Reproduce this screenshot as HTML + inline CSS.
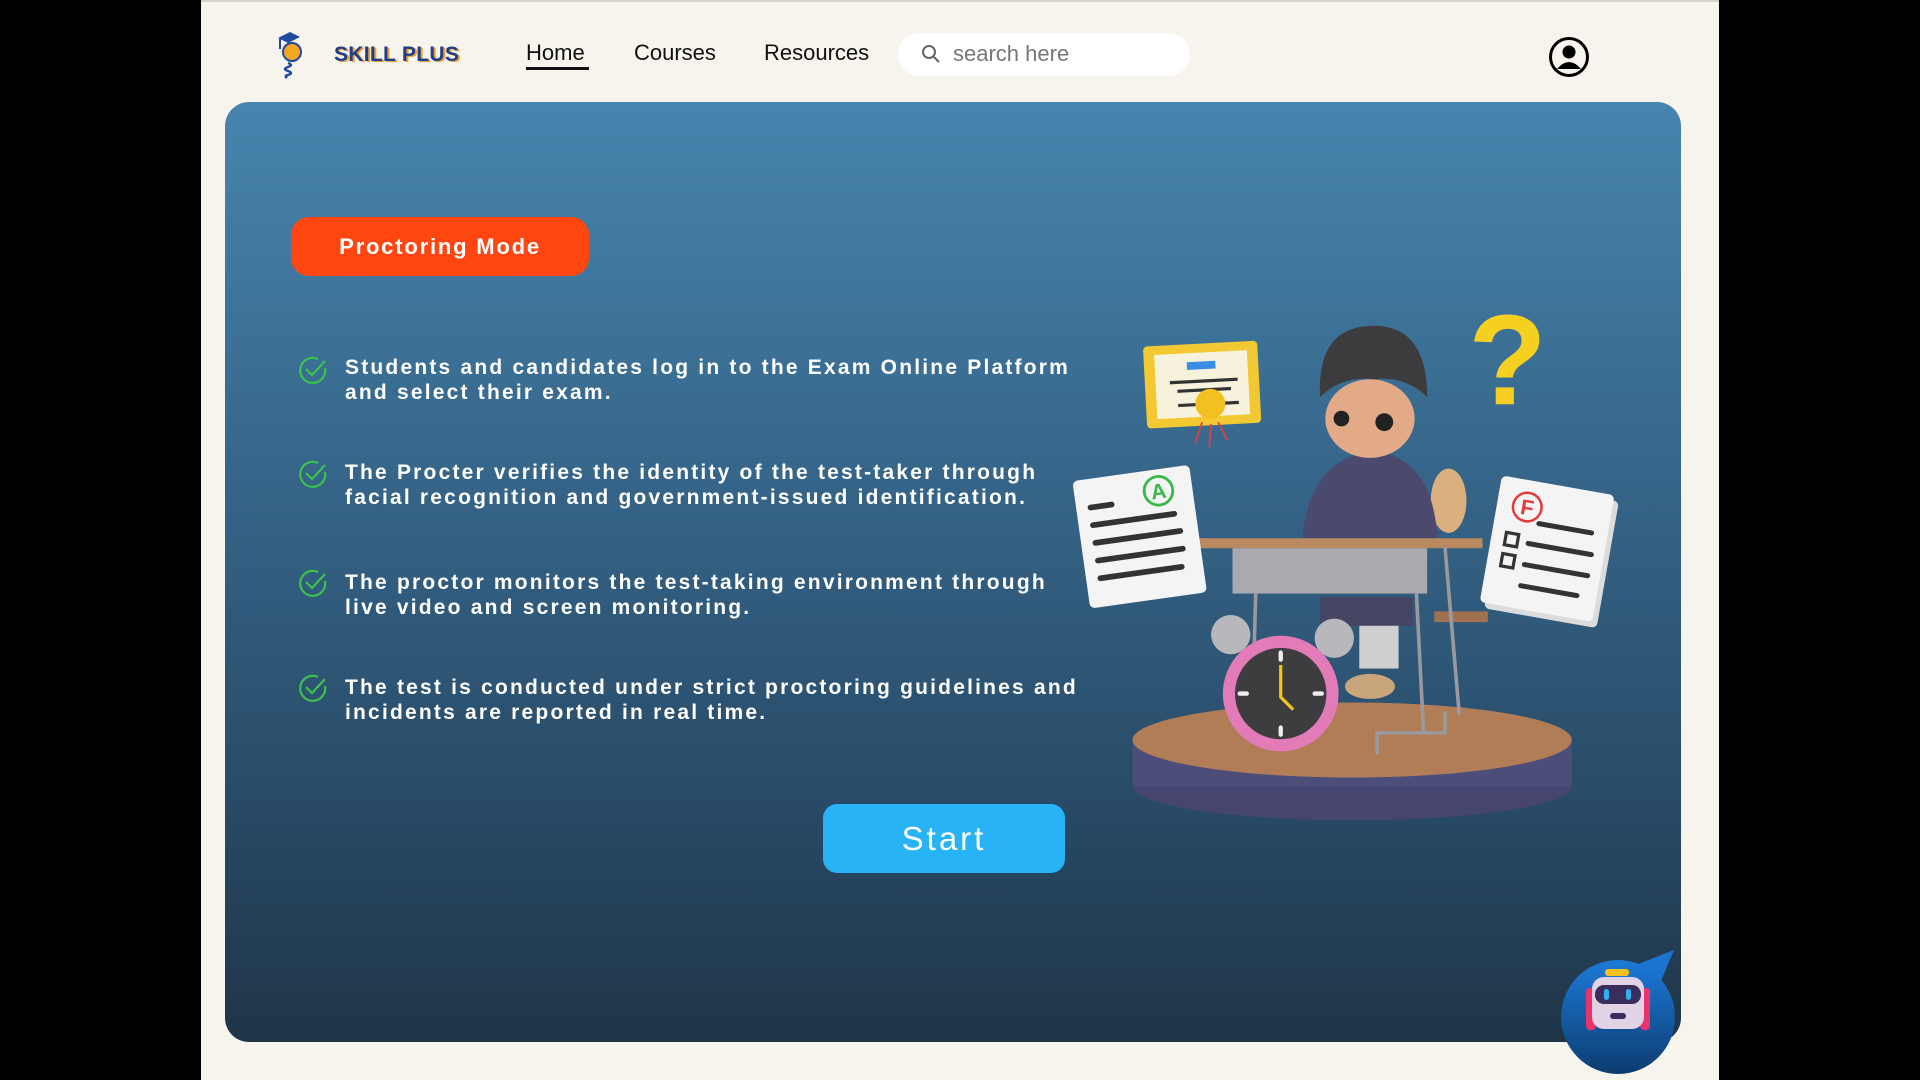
<!DOCTYPE html>
<html><head><meta charset="utf-8">
<style>
*{margin:0;padding:0;box-sizing:border-box}
body{width:1920px;height:1080px;background:#000;position:relative;overflow:hidden;font-family:"Liberation Sans",sans-serif}
#page{position:absolute;left:201px;top:0;width:1518px;height:1080px;background:#f6f4ec;border-top:2px solid #d5d3cc}
.abs{position:absolute}
.nav{position:absolute;top:40px;font-size:22px;color:#111}
#card{position:absolute;left:225px;top:102px;width:1456px;height:940px;border-radius:24px;background:linear-gradient(180deg,#4785ae 0%,#366589 40%,#284a66 75%,#1f3547 100%)}
.item{position:absolute;left:345px;color:#fff;font-weight:bold;font-size:21px;letter-spacing:2.2px;line-height:24.5px;white-space:nowrap}
.chk{position:absolute;left:298px;width:30px;height:30px}
</style></head><body>
<div id="page"></div>
<!-- logo -->
<svg class="abs" style="left:272px;top:30px" width="40" height="50" viewBox="0 0 40 50">
<polygon points="6,8 18,2 28,7 16,13" fill="#1f4aa0"/>
<rect x="7" y="9" width="2" height="10" fill="#1f4aa0"/>
<circle cx="20" cy="22" r="9" fill="#f5a623" stroke="#1f4aa0" stroke-width="2"/>
<path d="M16 33 q6 2 0 4 q-6 2 0 4 q6 2 0 4 q-4 1 -1 3" fill="none" stroke="#1f4aa0" stroke-width="2.5"/>
</svg>
<div class="abs" style="left:334px;top:43px;font-size:21px;font-weight:900;color:#1d3f8c;letter-spacing:0.3px;text-shadow:2px 1px 0 #f0a030">SKILL PLUS</div>
<div class="nav" style="left:526px">Home</div>
<div class="abs" style="left:526px;top:67px;width:63px;height:3px;background:#111"></div>
<div class="nav" style="left:634px">Courses</div>
<div class="nav" style="left:764px">Resources</div>
<div class="abs" style="left:898px;top:33px;width:292px;height:43px;border-radius:22px;background:#fff"></div>
<svg class="abs" style="left:920px;top:43px" width="22" height="22" viewBox="0 0 22 22"><circle cx="9" cy="9" r="6" fill="none" stroke="#666" stroke-width="2"/><line x1="13.5" y1="13.5" x2="19" y2="19" stroke="#666" stroke-width="2"/></svg>
<div class="abs" style="left:953px;top:41px;font-size:22px;color:#777">search here</div>
<svg class="abs" style="left:1548px;top:36px" width="42" height="42" viewBox="0 0 42 42"><circle cx="21" cy="21" r="18.5" fill="none" stroke="#000" stroke-width="3"/><circle cx="21" cy="16" r="6.5" fill="#000"/><path d="M9 33 q12 -14 24 0" fill="#000"/></svg>

<div id="card"></div>
<div class="abs" style="left:291px;top:217px;width:298px;height:59px;border-radius:18px;background:#ff4510;color:#fff;font-weight:bold;font-size:22px;letter-spacing:1.8px;text-align:center;line-height:59px">Proctoring Mode</div>

<svg class="chk" style="top:355px" viewBox="0 0 30 30"><path d="M27 13 A12.5 12.5 0 1 1 20 4" fill="none" stroke="#3cc24a" stroke-width="2.2"/><path d="M8 14 l6 6 l13 -14" fill="none" stroke="#3cc24a" stroke-width="2.2"/></svg>
<div class="item" style="top:356px">Students and candidates log in to the Exam Online Platform<br>and select their exam.</div>
<svg class="chk" style="top:459px" viewBox="0 0 30 30"><path d="M27 13 A12.5 12.5 0 1 1 20 4" fill="none" stroke="#3cc24a" stroke-width="2.2"/><path d="M8 14 l6 6 l13 -14" fill="none" stroke="#3cc24a" stroke-width="2.2"/></svg>
<div class="item" style="top:461px">The Procter verifies the identity of the test-taker through<br>facial recognition and government-issued identification.</div>
<svg class="chk" style="top:568px" viewBox="0 0 30 30"><path d="M27 13 A12.5 12.5 0 1 1 20 4" fill="none" stroke="#3cc24a" stroke-width="2.2"/><path d="M8 14 l6 6 l13 -14" fill="none" stroke="#3cc24a" stroke-width="2.2"/></svg>
<div class="item" style="top:571px">The proctor monitors the test-taking environment through<br>live video and screen monitoring.</div>
<svg class="chk" style="top:673px" viewBox="0 0 30 30"><path d="M27 13 A12.5 12.5 0 1 1 20 4" fill="none" stroke="#3cc24a" stroke-width="2.2"/><path d="M8 14 l6 6 l13 -14" fill="none" stroke="#3cc24a" stroke-width="2.2"/></svg>
<div class="item" style="top:676px">The test is conducted under strict proctoring guidelines and<br>incidents are reported in real time.</div>

<div class="abs" style="left:823px;top:804px;width:242px;height:69px;border-radius:14px;background:#27b3f5;color:#fff;font-size:33px;letter-spacing:3px;text-align:center;line-height:69px">Start</div>

<!-- illustration -->
<svg class="abs" style="left:1070px;top:290px" width="560" height="530" viewBox="0 0 1568 1484">
<ellipse cx="790" cy="1390" rx="615" ry="95" fill="#45456f"/>
<rect x="175" y="1260" width="1230" height="130" fill="#4d4d7a"/>
<ellipse cx="790" cy="1260" rx="615" ry="105" fill="#b07d57"/>
<ellipse cx="1060" cy="590" rx="50" ry="90" fill="#d9b07e"/>
<rect x="1020" y="900" width="150" height="30" fill="#a07050"/>
<!-- boy -->
<rect x="810" y="880" width="110" height="180" fill="#cfcfcf"/>
<ellipse cx="840" cy="1110" rx="70" ry="35" fill="#c9a57c"/>
<path d="M700 860 h260 v80 h-260z" fill="#454463"/>
<path d="M650 700 q20 -230 200 -250 q170 20 180 260z" fill="#4b4a6e"/>
<ellipse cx="840" cy="360" rx="125" ry="110" fill="#e3aa88"/>
<path d="M700 300 q-10 -200 150 -200 q150 0 150 200 q-60 -60 -150 -50 q-90 -10 -150 50z" fill="#3c3c3e"/>
<circle cx="760" cy="360" r="22" fill="#222"/><circle cx="880" cy="370" r="25" fill="#222"/>
<!-- desk -->
<rect x="310" y="695" width="845" height="28" fill="#b98a62"/>
<rect x="455" y="723" width="545" height="127" fill="#a9a9ae"/>
<g stroke="#9a9a9e" stroke-width="10" fill="none"><line x1="520" y1="850" x2="510" y2="1200"/><line x1="970" y1="850" x2="990" y2="1240"/><line x1="1050" y1="720" x2="1090" y2="1190"/><path d="M860 1300 v-60 h190 v-60"/></g>
<!-- clock -->
<circle cx="450" cy="965" r="55" fill="#b8b8bc"/><circle cx="740" cy="975" r="55" fill="#b8b8bc"/>
<circle cx="590" cy="1130" r="162" fill="#e27bb8"/>
<circle cx="590" cy="1130" r="128" fill="#3d3d3f"/>
<g stroke="#eee" stroke-width="12" stroke-linecap="round"><line x1="590" y1="1015" x2="590" y2="1035"/><line x1="590" y1="1225" x2="590" y2="1245"/><line x1="475" y1="1130" x2="495" y2="1130"/><line x1="685" y1="1130" x2="705" y2="1130"/></g>
<path d="M590 1050 v90 l35 35" stroke="#f5c518" stroke-width="9" fill="none"/>
<!-- paper A -->
<g transform="rotate(-8 200 690)"><rect x="30" y="510" width="330" height="360" rx="14" fill="#f4f4f4"/>
<g stroke="#333" stroke-width="16" stroke-linecap="round"><line x1="70" y1="590" x2="130" y2="590"/><line x1="70" y1="640" x2="300" y2="640"/><line x1="70" y1="690" x2="310" y2="690"/><line x1="70" y1="740" x2="310" y2="740"/><line x1="70" y1="790" x2="300" y2="790"/></g>
<circle cx="265" cy="570" r="40" fill="none" stroke="#3cb84a" stroke-width="8"/><text x="265" y="592" font-size="60" font-weight="bold" fill="#3cb84a" text-anchor="middle" font-family="Liberation Sans">A</text></g>
<!-- paper F -->
<g transform="rotate(10 1340 730)"><rect x="1190" y="560" width="320" height="360" rx="14" fill="#dcdcdc"/><rect x="1175" y="545" width="320" height="360" rx="14" fill="#f4f4f4"/>
<g stroke="#333" stroke-width="14" stroke-linecap="round"><line x1="1300" y1="660" x2="1450" y2="660"/><line x1="1280" y1="720" x2="1460" y2="720"/><line x1="1280" y1="780" x2="1460" y2="780"/><line x1="1280" y1="840" x2="1440" y2="840"/></g>
<rect x="1215" y="700" width="35" height="35" fill="none" stroke="#333" stroke-width="9"/><rect x="1215" y="760" width="35" height="35" fill="none" stroke="#333" stroke-width="9"/>
<circle cx="1260" cy="620" r="40" fill="none" stroke="#e23b3b" stroke-width="7"/><text x="1260" y="642" font-size="60" font-weight="bold" fill="#e23b3b" text-anchor="middle" font-family="Liberation Sans">F</text></g>
<!-- certificate -->
<g transform="rotate(-3 370 265)"><rect x="210" y="150" width="320" height="230" rx="12" fill="#f2c833"/><rect x="240" y="175" width="260" height="180" fill="#f7f2dc"/>
<rect x="330" y="200" width="80" height="22" fill="#3a8de0"/>
<g stroke="#333" stroke-width="9"><line x1="280" y1="255" x2="470" y2="255"/><line x1="300" y1="280" x2="450" y2="280"/><line x1="300" y1="320" x2="470" y2="320"/></g>
<circle cx="390" cy="320" r="42" fill="#f2c020"/></g>
<g stroke="#e04040" stroke-width="5"><line x1="370" y1="370" x2="350" y2="430"/><line x1="395" y1="375" x2="390" y2="440"/><line x1="415" y1="370" x2="440" y2="420"/></g>
<text x="1225" y="320" font-size="360" font-weight="bold" fill="#f5d020" text-anchor="middle" font-family="Liberation Sans">?</text>
</svg>

<!-- robot -->
<svg class="abs" style="left:1558px;top:948px" width="120" height="130" viewBox="0 0 120 130">
<defs><linearGradient id="g" x1="0" y1="0" x2="0" y2="1"><stop offset="0" stop-color="#1c7ad8"/><stop offset="1" stop-color="#0d3c70"/></linearGradient></defs>
<polygon points="70,20 116,2 100,40" fill="#1c74d0"/>
<circle cx="60" cy="69" r="57" fill="url(#g)"/>
<rect x="28" y="40" width="10" height="42" rx="4" fill="#e8336b"/><rect x="82" y="40" width="10" height="42" rx="4" fill="#e8336b"/>
<rect x="47" y="21" width="24" height="7" rx="3" fill="#f5c020"/>
<rect x="34" y="29" width="52" height="52" rx="12" fill="#e2d2e6"/>
<rect x="37" y="37" width="46" height="19" rx="9" fill="#3a2e5c"/>
<rect x="46" y="41" width="5" height="11" rx="2.5" fill="#2fb0f0"/><rect x="68" y="41" width="5" height="11" rx="2.5" fill="#2fb0f0"/>
<rect x="52" y="65" width="16" height="6" rx="3" fill="#3a2e5c"/>
</svg>
</body></html>
